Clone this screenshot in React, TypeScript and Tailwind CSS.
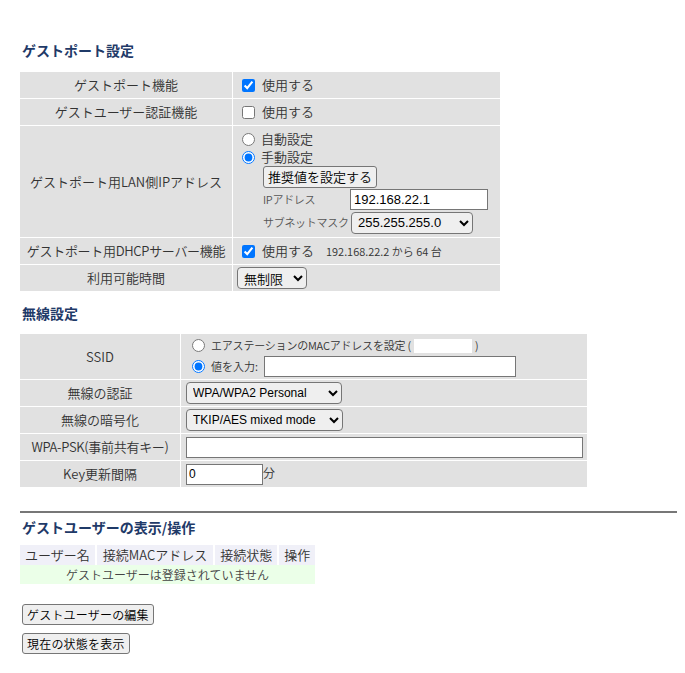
import React from 'react';

const jp = "font-['Noto_Sans_CJK_JP',sans-serif]";
const arial = "font-['Liberation_Sans',sans-serif]";

const Label: React.FC<{ children: React.ReactNode; className?: string }> = ({ children, className = '' }) => (
  <td className={`bg-[#e1e1e1] text-center align-middle text-[13px] text-[#333] font-[350] whitespace-nowrap px-1 ${className}`}>{children}</td>
);

const Value: React.FC<{ children: React.ReactNode; className?: string }> = ({ children, className = '' }) => (
  <td className={`bg-[#e1e1e1] align-middle text-[13px] text-[#333] font-[350] whitespace-nowrap ${className}`}>{children}</td>
);

const Check: React.FC<{ checked?: boolean }> = ({ checked }) => (
  <input type="checkbox" defaultChecked={checked} className="w-[13px] h-[13px] m-0 mr-[7px] accent-[#0075ff] align-[-2px]" />
);

const Radio: React.FC<{ checked?: boolean; name: string }> = ({ checked, name }) => (
  <input type="radio" name={name} defaultChecked={checked} className="w-[13px] h-[13px] m-0 mr-[6px] accent-[#0075ff] align-[-2px]" />
);

const Select: React.FC<{ value: string; className?: string }> = ({ value, className = '' }) => (
  <select
    defaultValue={value}
    className={`${arial} h-[22px] border border-[#767676] rounded-[4px] bg-[#efefef] text-[12px] text-black font-normal pl-[2px] align-middle ${className}`}
  >
    <option>{value}</option>
  </select>
);

const Heading: React.FC<{ children: React.ReactNode }> = ({ children }) => (
  <h2 className="text-[14px] leading-[20px] font-bold text-[#1f3a68] pl-[2px]">{children}</h2>
);

const Btn: React.FC<{ children: React.ReactNode; className?: string }> = ({ children, className = '' }) => (
  <button className={`h-[21px] px-[4px] border border-[#767676] rounded-[3px] bg-[#efefef] text-[12px] font-[350] text-black leading-none ${className}`}>
    {children}
  </button>
);

export default function App() {
  return (
    <div className={`${jp} bg-white w-[685px] h-[673px] overflow-hidden pl-5 pt-[40px] text-[#333]`}>
      {/* ゲストポート設定 */}
      <Heading>ゲストポート設定</Heading>
      <table className="mt-[11px] border-separate border-spacing-px -ml-px w-[482px] table-fixed">
        <colgroup>
          <col className="w-[212px]" />
          <col />
        </colgroup>
        <tbody>
          <tr className="h-[26px]">
            <Label>ゲストポート機能</Label>
            <Value className="pl-[9px]"><Check checked />使用する</Value>
          </tr>
          <tr className="h-[26px]">
            <Label>ゲストユーザー認証機能</Label>
            <Value className="pl-[9px]"><Check />使用する</Value>
          </tr>
          <tr className="h-[111px]">
            <Label>ゲストポート用LAN側IPアドレス</Label>
            <Value className="pl-[9px] py-[3px]">
              <div className="leading-[18px]"><Radio name="ip" />自動設定</div>
              <div className="leading-[18px]"><Radio name="ip" checked />手動設定</div>
              <div className="pl-[21px] flex flex-col items-start gap-[1px]">
                <Btn className="h-[22px] text-[13px]">推奨値を設定する</Btn>
                <div className="flex items-center text-[11px] tracking-[-0.3px] text-[#555]">
                  <span className="w-[87px]">IPアドレス</span>
                  <input defaultValue="192.168.22.1" className={`${arial} w-[138px] h-[21px] border border-[#767676] bg-white px-[3px] text-[13px] tracking-normal font-normal text-black`} />
                </div>
                <div className="flex items-center text-[11px] tracking-[-0.3px] text-[#555] mt-[1px]">
                  <span className="w-[88px] whitespace-nowrap">サブネットマスク</span>
                  <Select value="255.255.255.0" className="w-[122px] text-[13px] tracking-normal" />
                </div>
              </div>
            </Value>
          </tr>
          <tr className="h-[26px]">
            <Label className="px-0 tracking-[-0.3px]">ゲストポート用DHCPサーバー機能</Label>
            <Value className="pl-[9px]">
              <Check checked />使用する<span className="ml-[12px] text-[11px]">192.168.22.2 から 64 台</span>
            </Value>
          </tr>
          <tr className="h-[26px]">
            <Label>利用可能時間</Label>
            <Value className="pl-[4px]">
              <select defaultValue="無制限" className="h-[22px] w-[70px] border border-[#767676] rounded-[4px] bg-[#efefef] text-[13px] font-[350] text-black pl-[2px] align-middle">
                <option>無制限</option>
              </select>
            </Value>
          </tr>
        </tbody>
      </table>

      {/* 無線設定 */}
      <div className="mt-[11px]">
        <Heading>無線設定</Heading>
      </div>
      <table className="mt-[10px] border-separate border-spacing-px -ml-px w-[569px] table-fixed">
        <colgroup>
          <col className="w-[160px]" />
          <col />
        </colgroup>
        <tbody>
          <tr className="h-[45px]">
            <Label>SSID</Label>
            <Value className="pl-[11px]">
              <div className="flex items-center h-[20px] text-[11px] tracking-[-0.2px]">
                <Radio name="ssid" />エアステーションのMACアドレスを設定 (
                <span className="inline-block w-[58px] h-[14px] bg-white mx-[3px]" />)
              </div>
              <div className="flex items-center h-[22px] text-[11px]">
                <Radio name="ssid" checked />値を入力:
                <input className="ml-[6px] w-[252px] h-[21px] border border-[#767676] bg-white" />
              </div>
            </Value>
          </tr>
          <tr className="h-[26px]">
            <Label>無線の認証</Label>
            <Value className="pl-[5px]"><Select value="WPA/WPA2 Personal" className="w-[156px]" /></Value>
          </tr>
          <tr className="h-[26px]">
            <Label>無線の暗号化</Label>
            <Value className="pl-[5px]"><Select value="TKIP/AES mixed mode" className="w-[157px]" /></Value>
          </tr>
          <tr className="h-[26px]">
            <Label className="px-0 tracking-[-0.3px]">WPA-PSK(事前共有キー)</Label>
            <Value className="pl-[5px]"><input className="w-[397px] h-[21px] border border-[#767676] bg-white align-middle" /></Value>
          </tr>
          <tr className="h-[26px]">
            <Label>Key更新間隔</Label>
            <Value className="pl-[5px]">
              <input defaultValue="0" className={`${arial} w-[77px] h-[21px] border border-[#767676] bg-white px-[2px] text-[12px] font-normal text-black align-middle`} />
              <span className="text-[12px]">分</span>
            </Value>
          </tr>
        </tbody>
      </table>

      <hr className="mt-[23px] mr-[8px] border-0 border-t-2 border-[#777]" />

      {/* ゲストユーザーの表示/操作 */}
      <div className="mt-[4px]">
        <Heading>ゲストユーザーの表示/操作</Heading>
      </div>
      <table className="mt-[8px] border-separate border-spacing-0 text-[13px] font-[350] text-[#333]">
        <thead>
          <tr className="h-[20px] bg-[#f0f0f8]">
            <th className="font-[350] px-[5px] border-r-2 border-white whitespace-nowrap">ユーザー名</th>
            <th className="font-[350] px-[6px] border-r-2 border-white whitespace-nowrap">接続MACアドレス</th>
            <th className="font-[350] px-[5px] border-r-2 border-white whitespace-nowrap">接続状態</th>
            <th className="font-[350] px-[5px] whitespace-nowrap">操作</th>
          </tr>
        </thead>
        <tbody>
          <tr className="h-[19px]">
            <td colSpan={4} className="bg-[#ebffe8] text-center text-[12px] text-[#444]">ゲストユーザーは登録されていません</td>
          </tr>
        </tbody>
      </table>

      <div className="mt-[20px] flex flex-col items-start gap-[8px] pl-[2px]">
        <Btn className="px-[3px] tracking-[0.2px]">ゲストユーザーの編集</Btn>
        <Btn className="px-[3px] tracking-[0.2px]">現在の状態を表示</Btn>
      </div>
    </div>
  );
}
